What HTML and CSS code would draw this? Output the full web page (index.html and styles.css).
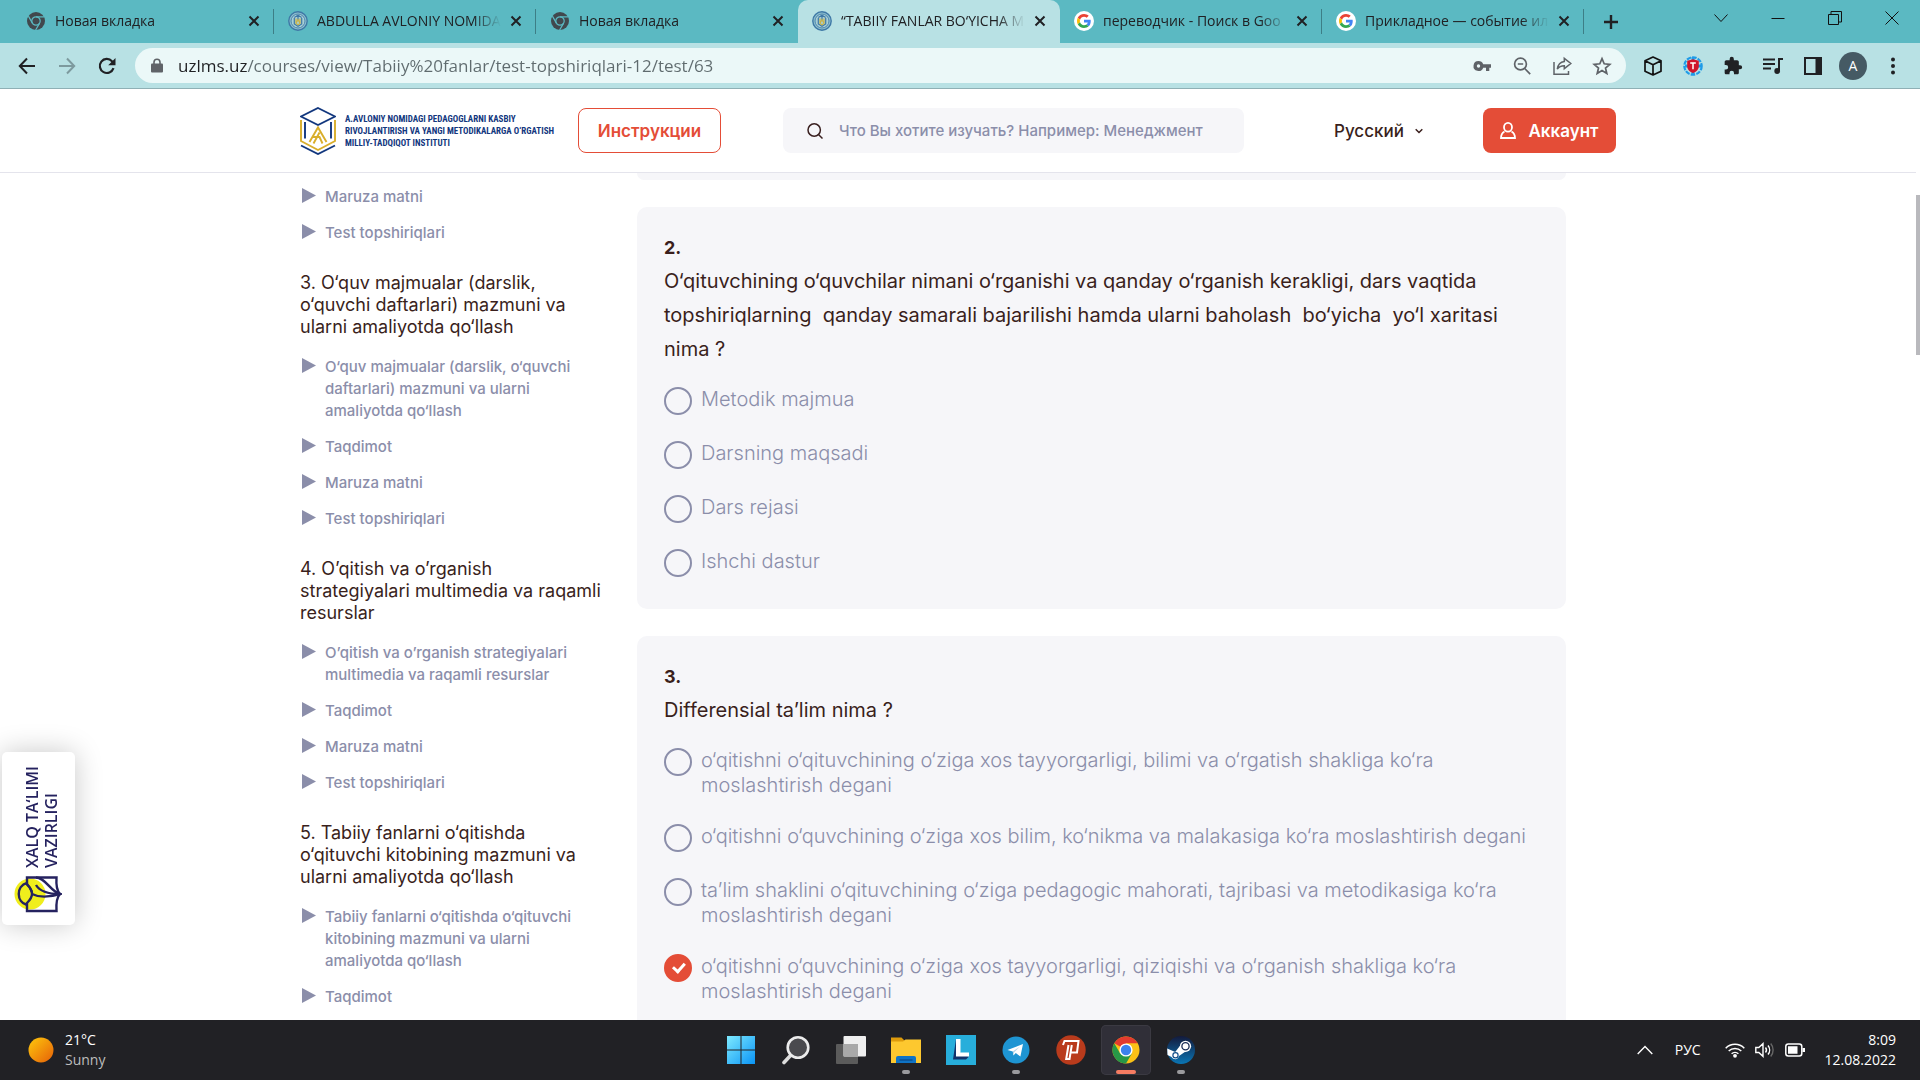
FILE: index.html
```html
<!DOCTYPE html>
<html lang="uz">
<head>
<meta charset="utf-8">
<meta name="viewport" content="width=device-width, initial-scale=1">
<title>“TABIIY FANLAR BO‘YICHA”</title>
<link rel="stylesheet" href="styles.css">
</head>
<body>
<svg class="sprite" aria-hidden="true">
  <symbol id="i-close" viewBox="0 0 12 12"><path d="M1.5 1.5l9 9m0-9l-9 9" stroke="currentColor" stroke-width="2" fill="none"/></symbol>
  <symbol id="i-newtab" viewBox="0 0 18 18"><circle cx="9" cy="9" r="9" fill="#41484d"/><g fill="none" stroke="#5bb9c2" stroke-width="1.2"><circle cx="9" cy="9" r="4.2"/><path d="M9 4.8h8M5.4 11.1l-4-7M12.6 11.1l-4 7"/></g><circle cx="9" cy="9" r="2.9" fill="#41484d"/></symbol>
  <symbol id="i-inst" viewBox="0 0 20 20"><circle cx="10" cy="10" r="9.2" fill="#8fc0cf" stroke="#3e78a6" stroke-width="1.4"/><circle cx="10" cy="10" r="7" fill="#a9cfd6" stroke="#4d86ae" stroke-width="1"/><path d="M6.3 6.5L10 4.3l3.700 2.200M10 9V4.300M6.300 7v6l3.700 2.300 3.700-2.300V7" fill="none" stroke="#3e78a6" stroke-width="1.200"/><path d="M7.800 13L10 8.500l2.200 4.500M8 7.500v5l2 1.300 2-1.300v-5" fill="none" stroke="#c9b44a" stroke-width="1.200"/></symbol>
  <symbol id="i-google" viewBox="0 0 20 20"><circle cx="10" cy="10" r="10" fill="#fff"/><g transform="translate(3 3) scale(.2917)"><path fill="#EA4335" d="M24 9.500c3.540 0 6.710 1.220 9.210 3.600l6.850-6.850C35.900 2.380 30.470 0 24 0 14.620 0 6.510 5.380 2.560 13.220l7.980 6.190C12.430 13.720 17.740 9.500 24 9.500z"/><path fill="#4285F4" d="M46.980 24.550c0-1.570-.15-3.090-.38-4.550H24v9.020h12.940c-.58 2.960-2.260 5.480-4.780 7.180l7.730 6c4.510-4.180 7.090-10.360 7.090-17.650z"/><path fill="#FBBC05" d="M10.530 28.590c-.48-1.450-.76-2.990-.76-4.590s.27-3.140.76-4.590l-7.980-6.190C.92 16.460 0 20.120 0 24s.92 7.540 2.560 10.780l7.970-6.190z"/><path fill="#34A853" d="M24 48c6.480 0 11.930-2.130 15.890-5.810l-7.730-6c-2.150 1.450-4.920 2.300-8.160 2.300-6.260 0-11.570-4.220-13.470-9.910l-7.980 6.190C6.510 42.620 14.620 48 24 48z"/></g></symbol>
</svg>

<header class="browser">
  <div class="tabs">
    <div class="tab"><svg class="fav"><use href="#i-newtab"/></svg><span class="tab-title">Новая вкладка</span><button class="tab-close" aria-label="Закрыть"><svg><use href="#i-close"/></svg></button></div>
    <div class="tab"><svg class="fav fav-big"><use href="#i-inst"/></svg><span class="tab-title">ABDULLA AVLONIY NOMIDA</span><button class="tab-close" aria-label="Закрыть"><svg><use href="#i-close"/></svg></button></div>
    <div class="tab tab-last"><svg class="fav"><use href="#i-newtab"/></svg><span class="tab-title">Новая вкладка</span><button class="tab-close" aria-label="Закрыть"><svg><use href="#i-close"/></svg></button></div>
    <div class="tab tab-active"><svg class="fav fav-big"><use href="#i-inst"/></svg><span class="tab-title">“TABIIY FANLAR BO‘YICHA M</span><button class="tab-close" aria-label="Закрыть"><svg><use href="#i-close"/></svg></button></div>
    <div class="tab"><svg class="fav fav-big"><use href="#i-google"/></svg><span class="tab-title">переводчик - Поиск в Goo</span><button class="tab-close" aria-label="Закрыть"><svg><use href="#i-close"/></svg></button></div>
    <div class="tab"><svg class="fav fav-big"><use href="#i-google"/></svg><span class="tab-title">Прикладное — событие ил</span><button class="tab-close" aria-label="Закрыть"><svg><use href="#i-close"/></svg></button></div>
    <button class="new-tab" aria-label="Новая вкладка"><svg viewBox="0 0 16 16"><path d="M8 1v14M1 8h14" stroke="currentColor" stroke-width="2.400"/></svg></button>
    <div class="win">
      <button aria-label="Поиск вкладок"><svg viewBox="0 0 14 14"><path d="M.5 3.500l6.500 7 6.500-7"/></svg></button>
      <button aria-label="Свернуть"><svg viewBox="0 0 14 14"><path d="M.5 7.500h13"/></svg></button>
      <button aria-label="Развернуть"><svg viewBox="0 0 14 14"><path d="M.5 3.500h10v10H.5zM3 3.500v-3h10.500V11h-3"/></svg></button>
      <button aria-label="Закрыть окно"><svg viewBox="0 0 14 14"><path d="M.5.5l13 13m0-13l-13 13"/></svg></button>
    </div>
  </div>
  <div class="toolbar">
    <div class="nav">
      <button aria-label="Назад"><svg viewBox="0 0 18 18"><path d="M17 9H2m7-7.500L1.800 9 9 16.500" fill="none" stroke="currentColor" stroke-width="2"/></svg></button>
      <button aria-label="Вперёд" class="dim"><svg viewBox="0 0 18 18"><path d="M1 9h15M9 1.500L16.200 9 9 16.500" fill="none" stroke="currentColor" stroke-width="2"/></svg></button>
      <button aria-label="Обновить"><svg viewBox="0 0 18 18"><path d="M15.500 11.200A7 7 0 1 1 14 4.200l1.500 1.500" fill="none" stroke="currentColor" stroke-width="2.200"/><path d="M17.500 1v7.300h-7.300z" fill="currentColor"/></svg></button>
    </div>
    <div class="omnibox">
      <svg class="lock" viewBox="0 0 12 14"><path d="M1 5h10a1 1 0 0 1 1 1v7a1 1 0 0 1-1 1H1a1 1 0 0 1-1-1V6a1 1 0 0 1 1-1z" fill="#5f6368"/><path d="M3 5.500V3.800a3 3 0 0 1 6 0v1.700" fill="none" stroke="#5f6368" stroke-width="1.600"/></svg>
      <input class="url" type="text" aria-label="Адресная строка" value="uzlms.uz/courses/view/Tabiiy%20fanlar/test-topshiriqlari-12/test/63">
      <div class="omni-icons">
        <svg viewBox="0 0 20 20"><path fill="#5f6368" d="M6.500 5a5 5 0 1 0 4.700 6.700H14V15h3.300v-3.300H19V8.300h-7.800A5 5 0 0 0 6.500 5zm0 3.300a1.700 1.700 0 1 1 0 3.400 1.700 1.700 0 0 1 0-3.400z"/></svg>
        <svg viewBox="0 0 20 20"><g fill="none" stroke="#5f6368" stroke-width="1.700"><circle cx="8.500" cy="8" r="5.900"/><path d="M12.700 12.500l5.500 5.700M5.800 8h5.400"/></g></svg>
        <svg viewBox="0 0 20 20"><g fill="none" stroke="#5f6368" stroke-width="1.500"><path d="M2 6v12.300h14.500V15"/><path d="M12.300 2.300l6.500 5.200-6.500 5.200V9.800c-3.300 0-5.400 1-7 3.300.6-4 2.900-6.900 7-7.500z"/></g></svg>
        <svg viewBox="0 0 20 20"><path d="M10 2.600l2.200 5.200 5.600.5-4.300 3.700 1.300 5.500-4.800-3-4.800 3 1.300-5.500-4.300-3.700 5.600-.5z" fill="none" stroke="#5f6368" stroke-width="1.700"/></svg>
      </div>
    </div>
    <div class="exts">
      <button aria-label="Расширение"><svg viewBox="0 0 20 20"><path d="M10 1l8 3.800v10.400L10 19l-8-3.800V4.800zM2 4.800l8 3.900 8-3.900M10 8.700V19" fill="none" stroke="#111" stroke-width="1.700" stroke-linejoin="round"/></svg></button>
      <button aria-label="Переводчик"><svg viewBox="0 0 20 20"><circle cx="10" cy="10" r="8.700" fill="none" stroke="#1e9be8" stroke-width="2.200" stroke-dasharray="4.500 1.200"/><path d="M2 10h16M10 1v18" stroke="#1e9be8" stroke-width="3"/><path d="M10 3.200l5.800 1.600v5.400c0 3.300-2.600 5.500-5.800 6.800-3.200-1.300-5.800-3.500-5.800-6.800V4.800z" fill="#d0142c"/><path d="M7.200 7h5.600M10 7v6.200" stroke="#fff" stroke-width="1.500"/></svg></button>
      <button aria-label="Расширения"><svg viewBox="0 0 24 24"><path fill="#202124" d="M20.500 11H19V7c0-1.100-.9-2-2-2h-4V3.500a2.500 2.500 0 0 0-5 0V5H4c-1.100 0-2 .9-2 2v3.800h1.500a2.700 2.700 0 0 1 0 5.400H2V20c0 1.100.9 2 2 2h3.800v-1.500a2.700 2.700 0 0 1 5.400 0V22H17c1.100 0 2-.9 2-2v-4h1.500a2.500 2.500 0 0 0 0-5z"/></svg></button>
      <button aria-label="Медиа"><svg viewBox="0 0 20 20"><path d="M0 3.500h12M0 8h12M0 12.500h8M20 3h-4v12" fill="none" stroke="#202124" stroke-width="2"/><circle cx="14.200" cy="15" r="2.900" fill="#202124"/></svg></button>
      <button aria-label="Боковая панель"><svg viewBox="0 0 20 20"><path fill="#202124" fill-rule="evenodd" d="M1 1h18v18H1zm2 2v14h9.500V3z"/></svg></button>
      <button class="avatar" aria-label="Профиль">A</button>
      <button aria-label="Меню"><svg viewBox="0 0 20 20"><g fill="#202124"><circle cx="10" cy="3.500" r="2"/><circle cx="10" cy="10" r="2"/><circle cx="10" cy="16.500" r="2"/></g></svg></button>
    </div>
  </div>
</header>

<div class="viewport">
  <div class="site-header">
    <div class="container header-row">
      <a class="logo" href="#">
        <svg viewBox="0 0 36 48"><g fill="none" stroke-width="1.900"><path d="M18 1L35 9.500 18 18 1 9.500z" stroke="#12377e"/><path d="M5 15v16.500M31 15v16.500M1 38.500L18 47l17-8.500" stroke="#12377e"/><path d="M1 13v21l17 9 17-9V13" stroke="#d9ae2b"/><path d="M9.500 35L18 20.500 26.500 35M13.500 36.500l6-11M22.500 36.500l-3-6.500h-7" stroke="#d9ae2b"/></g></svg>
        <span>A.AVLONIY NOMIDAGI PEDAGOGLARNI KASBIY<br>RIVOJLANTIRISH VA YANGI METODIKALARGA O‘RGATISH<br>MILLIY-TADQIQOT INSTITUTI</span>
      </a>
      <a class="btn btn-outline" href="#">Инструкции</a>
      <label class="search">
        <svg viewBox="0 0 16 16"><g fill="none" stroke="#3a2020" stroke-width="1.500"><circle cx="7.200" cy="7" r="6.200"/><path d="M11.500 11.500l4 4"/></g></svg>
        <input type="text" aria-label="Поиск" placeholder="Что Вы хотите изучать? Например: Менеджмент">
      </label>
      <div class="lang">
        <select aria-label="Язык"><option>Русский</option></select>
        <svg viewBox="0 0 8 8"><path d="M.7 2.200L4 5.500l3.300-3.300" fill="none" stroke="#3a1f1c" stroke-width="1.500"/></svg>
      </div>
      <button class="btn btn-solid"><svg viewBox="0 0 16 17"><g fill="none" stroke="#fff" stroke-width="1.800"><ellipse cx="8" cy="5.300" rx="4" ry="4.400"/><path d="M4.500 9.500C2.500 10.700 1 12.800 1 16h14c0-3.200-1.500-5.300-3.500-6.500"/></g></svg>Аккаунт</button>
    </div>
  </div>

  <div class="page">
    <div class="container columns">
      <nav class="sidebar">
        <ul class="lessons">
          <li><a href="#">Maruza matni</a></li>
          <li><a href="#">Test topshiriqlari</a></li>
        </ul>
        <h3>3. O‘quv majmualar (darslik, o‘quvchi daftarlari) mazmuni va ularni amaliyotda qo‘llash</h3>
        <ul class="lessons">
          <li><a href="#">O‘quv majmualar (darslik, o‘quvchi daftarlari) mazmuni va ularni amaliyotda qo‘llash</a></li>
          <li><a href="#">Taqdimot</a></li>
          <li><a href="#">Maruza matni</a></li>
          <li><a href="#">Test topshiriqlari</a></li>
        </ul>
        <h3>4. O’qitish va o’rganish<br>strategiyalari multimedia va raqamli resurslar</h3>
        <ul class="lessons">
          <li><a href="#">O’qitish va o’rganish strategiyalari multimedia va raqamli resurslar</a></li>
          <li><a href="#">Taqdimot</a></li>
          <li><a href="#">Maruza matni</a></li>
          <li><a href="#">Test topshiriqlari</a></li>
        </ul>
        <h3>5. Tabiiy fanlarni o‘qitishda o‘qituvchi kitobining mazmuni va ularni amaliyotda qo‘llash</h3>
        <ul class="lessons">
          <li><a href="#">Tabiiy fanlarni o‘qitishda o‘qituvchi kitobining mazmuni va ularni amaliyotda qo‘llash</a></li>
          <li><a href="#">Taqdimot</a></li>
        </ul>
      </nav>

      <main class="questions">
        <div class="card card-end"></div>
        <section class="card">
          <div class="num">2.</div>
          <p class="question">O‘qituvchining o‘quvchilar nimani o‘rganishi va qanday o‘rganish kerakligi, dars vaqtida<br>topshiriqlarning&nbsp; qanday samarali bajarilishi hamda ularni baholash&nbsp; bo‘yicha&nbsp; yo‘l xaritasi<br>nima ?</p>
          <div class="options">
            <label><input type="radio" name="q2"><span>Metodik majmua</span></label>
            <label><input type="radio" name="q2"><span>Darsning maqsadi</span></label>
            <label><input type="radio" name="q2"><span>Dars rejasi</span></label>
            <label><input type="radio" name="q2"><span>Ishchi dastur</span></label>
          </div>
        </section>
        <section class="card">
          <div class="num">3.</div>
          <p class="question">Differensial ta’lim nima ?</p>
          <div class="options">
            <label><input type="radio" name="q3"><span>o‘qitishni o‘qituvchining o‘ziga xos tayyorgarligi, bilimi va o‘rgatish shakliga ko‘ra<br>moslashtirish degani</span></label>
            <label><input type="radio" name="q3"><span>o‘qitishni o‘quvchining o‘ziga xos bilim, ko‘nikma va malakasiga ko‘ra moslashtirish degani</span></label>
            <label><input type="radio" name="q3"><span>ta’lim shaklini o‘qituvchining o‘ziga pedagogic mahorati, tajribasi va metodikasiga ko‘ra<br>moslashtirish degani</span></label>
            <label><input type="radio" name="q3" checked><span>o‘qitishni o‘quvchining o‘ziga xos tayyorgarligi, qiziqishi va o‘rganish shakliga ko‘ra<br>moslashtirish degani</span></label>
          </div>
        </section>
      </main>
    </div>
  </div>

  <a class="ministry" href="#">
    <span>XALQ TA‘LIMI<br>VAZIRLIGI</span>
    <svg viewBox="0 0 48 38"><circle cx="16" cy="19" r="15.500" fill="#f0ee1c"/><g fill="none" stroke="#25225f" stroke-width="2.400"><path d="M46 19c-3-3-4-9-3.500-16.500H13v7c3 3 5 6 5 9.500s-2 6-5 9v8h29.500C42 28 43 22 46 19z"/><path d="M13 8C2 11 2 27 13 30M18 19c8 4 18 3 28 0C36 16 32 3 22 2.500M13 9c2 2 4 5 5 8M22 10c3 5 9 9 24 9"/></g></svg>
  </a>
  <div class="scroll-thumb"></div>
</div>

<footer class="taskbar">
  <div class="weather">
    <svg viewBox="0 0 26 26"><defs><linearGradient id="sun" x1="0" y1="0" x2="1" y2="1"><stop offset="0" stop-color="#fec90c"/><stop offset="1" stop-color="#e66008"/></linearGradient></defs><circle cx="13" cy="13" r="12.500" fill="url(#sun)"/></svg>
    <div>21°C<br><span>Sunny</span></div>
  </div>
  <div class="apps">
    <button aria-label="Пуск"><svg viewBox="0 0 30 30"><defs><linearGradient id="win" x1="0" y1="0" x2="1" y2="1"><stop offset="0" stop-color="#7eeaff"/><stop offset="1" stop-color="#0a94f5"/></linearGradient></defs><path fill="url(#win)" d="M1 1h13.500v13.500H1zM15.500 1H29v13.500H15.500zM1 15.500h13.500V29H1zM15.500 15.500H29V29H15.500z"/></svg></button>
    <button aria-label="Поиск"><svg viewBox="0 0 30 30"><path d="M10 20l-7 7.500" stroke="#ddd" stroke-width="3.600" stroke-linecap="round"/><circle cx="17" cy="12.500" r="10.300" fill="#4a4a4e" stroke="#ececec" stroke-width="2.600"/></svg></button>
    <button aria-label="Представление задач"><svg viewBox="0 0 30 30"><rect y="9" width="22" height="20" rx="1" fill="#5b5b5b"/><rect x="7.500" y="1" width="22.500" height="20.500" rx="1" fill="#efefef"/><rect x="7.500" y="9" width="14.500" height="12.500" fill="#a9a9a9"/></svg></button>
    <button aria-label="Проводник" class="running"><svg viewBox="0 0 30 30"><path d="M0 2.500h10.500l3 3H24V14H0z" fill="#dd9b0c"/><path d="M0 6.500h12l2.500-2H30V28H0z" fill="#fdc82f"/><path d="M5 28v-5a2 2 0 0 1 2-2h16a2 2 0 0 1 2 2v5z" fill="#0f73c5"/><path d="M8.500 25h13" stroke="#083f7a"/></svg></button>
    <button aria-label="L"><svg viewBox="0 0 30 30"><path fill="#27aedb" d="M0 0h30v30H0z"/><path d="M10 4L7 24.500h13l3-3-8-2z" fill="#12336b"/><path d="M10 4h4.500v13.500H23v4H10z" fill="#fff"/></svg></button>
    <button aria-label="Telegram" class="running"><svg viewBox="0 0 30 30"><circle cx="15" cy="15" r="13.500" fill="#1e95d3"/><path d="M6.500 15L22 9l-2.600 12.500-4.600-3.400-2.400 2.300-.6-4z" fill="#fff"/><path d="M11.800 16.400L19 11.500l-5.800 5.800-.8 3z" fill="#b5d5e8"/></svg></button>
    <button aria-label="P"><svg viewBox="0 0 30 30"><circle cx="15" cy="15" r="14.700" fill="#b93b1c"/><path d="M7 10l1.500-4H22.500L21 17.500h-6.500M12.500 10l-2.300 14h3.300l2.300-14" fill="none" stroke="#fff" stroke-width="2"/></svg></button>
    <button aria-label="Chrome" class="running current"><svg viewBox="0 0 30 30"><circle cx="15" cy="15" r="13.500" fill="#fbc116"/><path d="M15 15L3.300 8.250A13.500 13.500 0 0 1 26.700 8.250H15z" fill="#e33b2e"/><path d="M3.300 8.250A13.500 13.500 0 0 0 15 28.500l5.850-10.100L15 15l-5.850 3.400z" fill="#279847"/><circle cx="15" cy="15" r="6.600" fill="#fff"/><circle cx="15" cy="15" r="5.200" fill="#3b82ee"/></svg></button>
    <button aria-label="Steam" class="running"><svg viewBox="0 0 30 30"><defs><linearGradient id="st" x1="0" y1="0" x2="0" y2="1"><stop offset="0" stop-color="#131a3c"/><stop offset="1" stop-color="#0a75b4"/></linearGradient></defs><circle cx="15" cy="15" r="14" fill="url(#st)"/><path d="M1.200 13.500l8 3.500L15 9.500l6 6-8 5.500c-.5 3.500-5 4.500-7.500 1L1.500 20z" fill="#fff"/><circle cx="19.500" cy="11.300" r="5.600" fill="#fff"/><circle cx="19.500" cy="11.300" r="3.600" fill="#fff" stroke="#1a2c55" stroke-width="1.300"/><circle cx="9.500" cy="20.300" r="2.600" fill="none" stroke="#15508a" stroke-width="1.200"/></svg></button>
  </div>
  <div class="tray">
    <svg class="up" viewBox="0 0 16 10"><path d="M.7 9L8 1.500 15.300 9" fill="none" stroke="#fff" stroke-width="1.400"/></svg>
    <span class="kbd">РУС</span>
    <div class="status">
      <svg viewBox="0 0 20 16"><g fill="none" stroke="#fff" stroke-width="1.500"><path d="M.7 6.200a13 13 0 0 1 18.600 0M3.700 9a9 9 0 0 1 12.600 0M6.600 11.800a5 5 0 0 1 6.800 0"/></g><circle cx="10" cy="13.800" r="1.900" fill="#fff"/></svg>
      <svg viewBox="0 0 20 16"><g fill="none" stroke="#fff" stroke-width="1.400"><path d="M.8 5.500h3L8 1.700v12.600l-4.200-3.800h-3zM10.500 5.500a4 4 0 0 1 0 5M13 3.500a7 7 0 0 1 0 9"/><path d="M15.700 1.500a10 10 0 0 1 0 13" stroke="#666"/></g></svg>
      <svg viewBox="0 0 20 16"><rect x=".8" y="2" width="16" height="12" rx="2.500" fill="none" stroke="#fff" stroke-width="1.500"/><path d="M3 4.200h9.500v7.600H3zM17.500 6H20v4h-2.500z" fill="#fff"/></svg>
    </div>
    <div class="clock">8:09<br>12.08.2022</div>
  </div>
</footer>
</body>
</html>
```
FILE: styles.css
```css
* { box-sizing: border-box; }

body {
  margin: 0;
  height: 100vh;
  display: flex;
  flex-direction: column;
  overflow: hidden;
  background: #fff;
  font-family: Inter, "Open Sans", sans-serif;
  color: #3a1f1c;
}

button, input, select { font: inherit; color: inherit; border: 0; background: none; padding: 0; margin: 0; outline: 0; }
button { display: flex; align-items: center; justify-content: center; }
a { color: inherit; text-decoration: none; }
ul { list-style: none; margin: 0; padding: 0; }
svg { display: block; flex: none; }
.sprite { width: 0; height: 0; position: absolute; }

/* Browser window */
.browser { font-family: "Open Sans", "Noto Sans", sans-serif; color: #202124; flex: none; }
.tabs { display: flex; height: 43px; padding-left: 12px; background: #5bb9c2; }
.tab {
  position: relative;
  width: 262px;
  display: flex;
  align-items: center;
  gap: 9px;
  padding: 0 14px 2px;
  font-size: 14px;
}
.tab::after { content: ""; position: absolute; right: 0; top: 9px; width: 1px; height: 25px; background: #3d7e86; }
.tab-last::after, .tab-active::after { display: none; }
.tab-active { background: #b8e1e4; border-radius: 10px 10px 0 0; }
.fav { width: 18px; height: 18px; margin: 0 1px; }
.fav-big { width: 20px; height: 20px; margin: 0; }
.tab-title {
  flex: 1;
  min-width: 0;
  overflow: hidden;
  white-space: nowrap;
  line-height: 24px;
  mask-image: linear-gradient(90deg, #000 85%, transparent);
}
.tab-close svg { width: 12px; height: 12px; }
.new-tab { width: 54px; }
.new-tab svg { width: 16px; height: 16px; }
.win { margin-left: auto; display: flex; height: 36px; }
.win button { width: 57px; }
.win svg { width: 14px; height: 14px; fill: none; stroke: #111; stroke-width: 1; }

.toolbar { display: flex; align-items: center; height: 46px; padding: 0 7px; background: #b8e1e4; border-bottom: 1px solid #8fb0b5; }
.nav { display: flex; width: 128px; }
.nav button { width: 40px; height: 36px; }
.nav svg { width: 18px; height: 18px; }
.nav .dim { color: #7d9a9e; }
.omnibox { flex: 1; display: flex; align-items: center; height: 35px; border-radius: 18px; background: #ebf8f8; padding: 0 14px 0 16px; gap: 15px; }
.lock { width: 12px; height: 15px; }
.url {
  flex: 1;
  min-width: 0;
  height: 30px;
  font-size: 17px;
  color: transparent;
  background: linear-gradient(90deg, #202124 69px, #5f6b6e 69px);
  background-clip: text;
}
.omni-icons { display: flex; gap: 20px; }
.omni-icons svg { width: 20px; height: 20px; }
.exts { display: flex; margin-left: 7px; }
.exts button { width: 40px; height: 36px; }
.exts svg { width: 20px; height: 20px; }
.exts .avatar { width: 28px; height: 28px; margin: 4px 6px; border-radius: 50%; background: #455a64; color: #fff; font-size: 14px; }

/* Site */
.viewport { position: relative; flex: 1; min-height: 0; overflow: hidden; padding-right: 4px; }
.container { max-width: 1316px; margin: 0 auto; }
.site-header { height: 84px; border-bottom: 1px solid #e4e4ec; }
.header-row { display: flex; align-items: center; height: 83px; }
.logo { display: flex; align-items: center; gap: 9px; width: 278px; }
.logo svg { width: 36px; height: 48px; }
.logo span { font: bold 9px/12px "Liberation Sans Narrow", "Roboto Condensed", Roboto, sans-serif; color: #12377e; white-space: nowrap; }
.btn { height: 45px; border-radius: 8px; display: flex; align-items: center; justify-content: center; font-size: 17px; font-weight: 600; }
.btn-outline { width: 143px; border: 1px solid #e44d37; color: #e44d37; }
.btn-solid { width: 133px; margin-left: 57px; background: #e44d37; color: #fff; gap: 12px; }
.btn-solid svg { width: 16px; height: 17px; }
.search { flex: 1; display: flex; align-items: center; gap: 16px; height: 45px; margin: 0 90px 0 62px; padding: 0 24px; border-radius: 8px; background: #f6f6f9; }
.search svg { width: 16px; height: 16px; }
.search input { flex: 1; min-width: 0; font-size: 15px; font-weight: 500; }
.search input::placeholder { color: #8b8eaa; opacity: 1; }
.lang { display: flex; align-items: center; gap: 7px; width: 92px; }
.lang select { appearance: none; font-size: 17px; font-weight: 500; width: 74px; }
.lang svg { width: 8px; height: 8px; }

.columns { display: grid; grid-template-columns: 302px minmax(0, 1fr); gap: 35px; padding-right: 50px; }
.sidebar { padding-top: 13px; }
.lessons { display: flex; flex-direction: column; gap: 14px; }
.lessons a { position: relative; display: block; padding-left: 25px; font-size: 15px; line-height: 22px; font-weight: 500; color: #8b8eaa; }
.lessons a::before { content: ""; position: absolute; left: 2px; top: 2px; width: 14px; height: 15px; background: #8b8eaa; clip-path: polygon(0 0, 100% 50%, 0 100%); }
.sidebar h3 { margin: 28px 0 18px; font-size: 18px; line-height: 22px; font-weight: 400; }

.questions { display: flex; flex-direction: column; gap: 27px; }
.card { padding: 24px 27px 32px; border-radius: 10px; background: #f6f6f9; }
.card-end { height: 7px; padding: 0; border-radius: 0 0 10px 10px; }
.num { font-size: 18px; line-height: 33px; font-weight: 700; }
.question { margin: 0 0 21px; font-size: 20px; line-height: 34px; font-weight: 400; white-space: nowrap; }
.options { display: flex; flex-direction: column; gap: 26px; }
.options label { display: flex; gap: 9px; font-size: 20px; line-height: 25px; font-weight: 300; color: #8b8eaa; white-space: nowrap; }
.options input { appearance: none; flex: none; position: relative; width: 28px; height: 28px; border: 2px solid #8b8eaa; border-radius: 50%; }
.options input:checked { background: #e44d37; border-color: #e44d37; }
.options input:checked::after { content: ""; position: absolute; left: 9px; top: 6px; width: 5px; height: 9px; border: solid #fff; border-width: 0 3px 3px 0; box-sizing: content-box; transform: rotate(42deg) translate(-1px, -1px); }

.ministry { position: absolute; left: 2px; bottom: 95px; width: 73px; height: 173px; padding: 12px 0 12px 12px; display: flex; flex-direction: column; gap: 7px; background: #fff; border-radius: 5px; box-shadow: 0 0 28px rgba(0, 0, 0, .22); }
.ministry span { flex: 1; writing-mode: vertical-rl; transform: rotate(180deg); align-self: flex-start; margin-left: 9px; font: 600 16px/19px "Open Sans", sans-serif; color: #25225f; white-space: nowrap; }
.ministry svg { width: 48px; height: 38px; }
.scroll-thumb { position: absolute; right: 0; top: 106px; width: 4px; height: 160px; background: #b9b9bd; }

/* Taskbar */
.taskbar { flex: none; height: 60px; display: grid; grid-template-columns: 1fr auto 1fr; align-items: center; background: #212125; color: #fff; font: 14px/20px "Open Sans", "Noto Sans", sans-serif; }
.weather { display: flex; align-items: center; gap: 11px; padding-left: 28px; }
.weather svg { width: 26px; height: 26px; }
.weather span { color: #bdbdbd; }
.apps { display: flex; gap: 5px; padding-left: 2px; }
.apps button { position: relative; width: 50px; height: 50px; border-radius: 5px; }
.apps svg { width: 30px; height: 30px; }
.apps .current { background: #302f38; box-shadow: inset 0 0 0 1px #3b3a42; }
.running::after { content: ""; position: absolute; bottom: 1px; left: 21px; width: 8px; height: 4px; border-radius: 2px; background: #9a9a9e; }
.current::after { left: 15px; width: 20px; background: #f67c62; }
.tray { display: flex; align-items: center; justify-content: flex-end; padding-right: 24px; }
.up { width: 16px; height: 10px; }
.kbd { margin: 0 24px 0 22px; }
.status { display: flex; gap: 10px; margin-right: 20px; }
.status svg { width: 20px; height: 16px; }
.clock { text-align: right; }
```
